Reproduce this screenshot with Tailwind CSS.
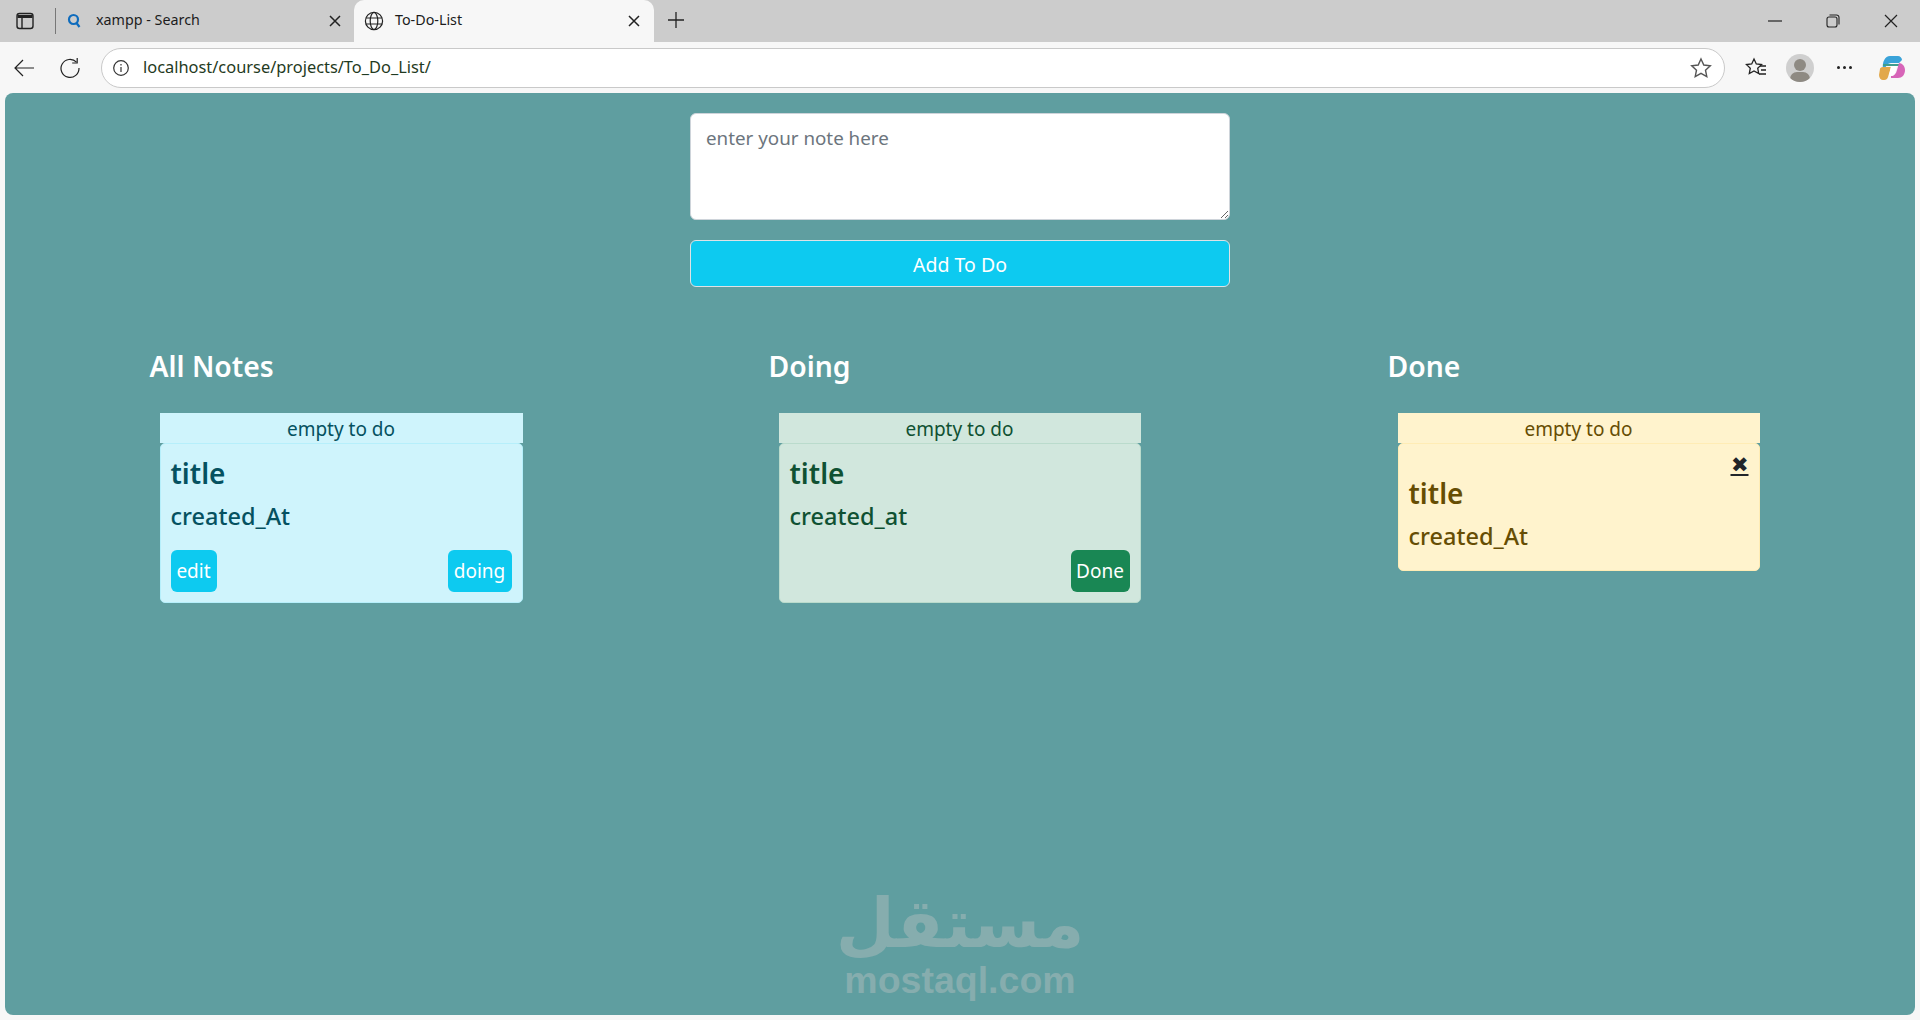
<!DOCTYPE html>
<html lang="en">
<head>
  <meta charset="UTF-8" />
  <title>To-Do-List</title>
  <script src="https://cdn.jsdelivr.net/npm/@tailwindcss/browser@4"></script>
</head>
<body class="h-[1020px] overflow-hidden bg-[#f7f7f7] font-['Noto_Sans',sans-serif]">
  <!-- tabs -->
  <div class="h-[42px] bg-[#cccccc] flex items-center text-[#1c1c1c]">
    <div class="w-[55px] flex justify-center pr-[5px]">
      <svg width="20" height="20" viewBox="0 0 20 20" fill="none" stroke="#222" stroke-width="1.4"><rect x="2" y="2.500" width="16" height="15" rx="2.500"/><path d="M2.500 5.500h15" stroke-width="3"/><path d="M7 7v10"/></svg>
    </div>
    <div class="w-px h-[26px] bg-[#777]"></div>
    <div class="w-[298px] flex items-center pl-[11px] h-full">
      <svg class="w-[14px] h-[16px]" viewBox="0 0 14 16" fill="none" stroke="#0f6cbd" stroke-width="2.2"><circle cx="6.500" cy="6.500" r="4.500"/><path d="M9.500 10l3 4"/></svg>
      <span class="ml-[15px] mb-[2px] text-[14.3px] w-[233px]">xampp - Search</span>
      <svg width="12" height="12" viewBox="0 0 12 12" stroke="#222" stroke-width="1.500"><path d="M1 1l10 10M11 1L1 11"/></svg>
    </div>
    <div class="w-[300px] h-full bg-[#f7f7f7] rounded-t-[10px] flex items-center pl-[10px]">
      <svg width="20" height="20" viewBox="0 0 20 20" fill="none" stroke="#222" stroke-width="1.2"><circle cx="10" cy="10" r="8.600"/><ellipse cx="10" cy="10" rx="3.800" ry="8.600"/><path d="M1.800 7h16.400M1.800 13h16.400"/></svg>
      <span class="ml-[11px] mb-[2px] text-[14.3px] w-[233px]">To-Do-List</span>
      <svg width="12" height="12" viewBox="0 0 12 12" stroke="#222" stroke-width="1.500"><path d="M1 1l10 10M11 1L1 11"/></svg>
    </div>
    <div class="ml-[13px] mb-[2px]">
      <svg width="18" height="18" viewBox="0 0 18 18" stroke="#222" stroke-width="1.3"><path d="M9 1v16M1 9h16"/></svg>
    </div>
    <div class="ml-auto flex items-center pr-[22px] gap-[44px]">
      <svg width="14" height="14" viewBox="0 0 14 14" stroke="#222" stroke-width="1.2"><path d="M0 7h14"/></svg>
      <svg width="14" height="14" viewBox="0 0 14 14" fill="none" stroke="#222" stroke-width="1.1"><rect x="1" y="3" width="10" height="10" rx="2"/><path d="M3.500 1h7a2.500 2.500 0 0 1 2.500 2.500v7"/></svg>
      <svg width="14" height="14" viewBox="0 0 14 14" stroke="#222" stroke-width="1.2"><path d="M1 1l12 12M13 1L1 13"/></svg>
    </div>
  </div>

  <!-- toolbar -->
  <div class="h-[51px] flex items-center">
    <div class="w-[35px] flex justify-end">
      <svg width="22" height="20" viewBox="0 0 22 20" fill="none" stroke="#222" stroke-width="1.2"><path d="M21 10H2M10 2l-8 8 8 8"/></svg>
    </div>
    <div class="w-[46px] flex justify-end">
      <svg width="22" height="22" viewBox="0 0 22 22" fill="none" stroke="#222" stroke-width="1.2"><path d="M17.500 5.200A9 9 0 1 0 20 11"/><path d="M18.200 1v5h-5"/></svg>
    </div>
    <div class="ml-[20px] w-[1624px] h-[40px] bg-white border border-[#c9c9c9] rounded-full flex items-center pl-[10px] pr-[12px]">
      <svg width="18" height="18" viewBox="0 0 18 18" fill="none" stroke="#333" stroke-width="1.2"><circle cx="9" cy="9" r="7.300"/><path d="M9 8v5M9 5v1.400"/></svg>
      <span class="ml-[13px] text-[16.4px] text-[#1f3a22]">localhost/course/projects/To_Do_List/</span>
      <svg class="ml-auto" width="22" height="22" viewBox="0 0 22 22" fill="none" stroke="#555" stroke-width="1.400"><path d="M11 2l2.800 6 6.500.8-4.800 4.400 1.300 6.400L11 16.400l-5.800 3.200 1.300-6.400L1.700 8.800 8.200 8z"/></svg>
    </div>
    <svg class="ml-[20px]" width="22" height="22" viewBox="0 0 22 22" fill="none" stroke="#222" stroke-width="1.300"><path d="M9 2l2.300 5 5.200.6-3.800 3.600 1 5.300L9 13.900l-4.700 2.600 1-5.300L1.500 7.600 6.700 7z"/><path d="M15 9h6M16 13h5M14 17h7"/></svg>
    <div class="ml-[19px] w-[28px] h-[28px] rounded-full bg-[#cfcfcf] relative overflow-hidden">
      <div class="absolute left-[8px] top-[5px] w-[12px] h-[12px] rounded-full bg-[#8e8a83]"></div>
      <div class="absolute left-[4px] top-[18px] w-[20px] h-[14px] rounded-full bg-[#8e8a83]"></div>
    </div>
    <div class="ml-[23px] flex gap-[3px]">
      <div class="w-[3px] h-[3px] rounded-full bg-[#222]"></div>
      <div class="w-[3px] h-[3px] rounded-full bg-[#222]"></div>
      <div class="w-[3px] h-[3px] rounded-full bg-[#222]"></div>
    </div>
    <svg class="ml-[26px]" width="28" height="28" viewBox="0 0 28 28" fill="none">
      <path d="M5 15C4 8 7 2 12 2h8c2 0 4 2 4 4l-3 3h-8c-3 0-5 2-6 6z" fill="#3aa3d9"/>
      <path d="M5 10h17l-1 2H5z" fill="#3f9d8e"/>
      <path d="M2 15c0-1 1-2 3-2h8l-3 10c-1 3-3 3-5 3s-4-2-4-5z" fill="#e2a84a"/>
      <path d="M13 22c3 0 5-2 6-6l2-7c3 0 6 3 6 7 0 5-3 8-7 8h-7z" fill="#d765b8"/>
      <path d="M13 12h6l-2 7c-1 2-2 3-4 3h-2z" fill="#fff"/>
    </svg>
  </div>

  <!-- page -->
  <div class="relative mx-[5px] h-[922px] bg-[#5f9ea0] rounded-[8px] pt-[20px]">
    <form class="w-[540px] mx-auto flex flex-col">
      <textarea placeholder="enter your note here" class="w-full h-[107px] bg-white border border-[#ced4da] rounded-[6px] px-[15px] py-[10px] text-[18.8px] text-[#212529] placeholder:text-[#6c757d] outline-none"></textarea>
      <button type="button" class="mt-[20px] h-[47px] w-full bg-[#0dcaf0] border border-[#dee2e6] rounded-[6px] pt-[2px] text-white text-[19.5px]">Add To Do</button>
    </form>

    <div class="w-[1621px] mx-auto mt-[60px] flex justify-between items-start">
      <div class="w-[383px]">
        <h2 class="h-[38px] text-[28.3px] leading-[38px] font-semibold text-white">All Notes</h2>
        <div class="mt-[28px] mx-[10px]">
          <div class="h-[30px] pt-px bg-[#cff4fc] text-[#055160] text-[19px] leading-[30px] text-center">empty to do</div>
          <div class="h-[160px] bg-[#cff4fc] border border-[#b6effb] rounded-[5px] text-[#055160] px-[10px] pt-[10px] flex flex-col">
            <div class="text-[28px] leading-[38px] font-semibold">title</div>
            <div class="mt-[9px] text-[23.5px] leading-[30px] font-medium">created_At</div>
            <div class="mt-auto mb-[10px] flex justify-between">
              <button type="button" class="h-[42px] w-[46px] bg-[#0dcaf0] rounded-[6px] text-white text-[19px]">edit</button>
              <button type="button" class="h-[42px] w-[64px] bg-[#0dcaf0] rounded-[6px] text-white text-[19px]">doing</button>
            </div>
          </div>
        </div>
      </div>

      <div class="w-[383px]">
        <h2 class="h-[38px] text-[28.3px] leading-[38px] font-semibold text-white">Doing</h2>
        <div class="mt-[28px] ml-[10px] mr-[11px]">
          <div class="h-[30px] pt-px bg-[#d1e7dd] text-[#0f5132] text-[19px] leading-[30px] text-center">empty to do</div>
          <div class="h-[160px] bg-[#d1e7dd] border border-[#badbcc] rounded-[5px] text-[#0f5132] px-[10px] pt-[10px] flex flex-col">
            <div class="text-[28px] leading-[38px] font-semibold">title</div>
            <div class="mt-[9px] text-[23.5px] leading-[30px] font-medium">created_at</div>
            <div class="mt-auto mb-[10px] flex justify-end">
              <button type="button" class="h-[42px] w-[59px] bg-[#198754] rounded-[6px] text-white text-[19px]">Done</button>
            </div>
          </div>
        </div>
      </div>

      <div class="w-[383px]">
        <h2 class="h-[38px] text-[28.3px] leading-[38px] font-semibold text-white">Done</h2>
        <div class="mt-[28px] ml-[10px] mr-[11px]">
          <div class="h-[30px] pt-px bg-[#fff3cd] text-[#664d03] text-[19px] leading-[30px] text-center">empty to do</div>
          <div class="h-[128px] bg-[#fff3cd] border border-[#ffecb5] rounded-[5px] text-[#664d03] px-[10px] pt-[8px] flex flex-col">
            <a href="#" class="self-end h-[22px] text-[#212529] text-[21px] leading-[24px] underline">✖</a>
            <div class="text-[28px] leading-[38px] font-semibold">title</div>
            <div class="mt-[9px] text-[23.5px] leading-[30px] font-medium">created_At</div>
          </div>
        </div>
      </div>
    </div>

    <!-- watermark -->
    <div class="absolute left-[840px] top-[793px] w-[230px] flex flex-col items-center text-[#86adae]">
      <div class="h-[76px] text-[68px] leading-[76px] font-bold font-['DejaVu_Sans',sans-serif]" dir="rtl">مستقل</div>
      <div class="-mt-[2px] text-[37.500px] leading-[40px] font-bold font-['Liberation_Sans',sans-serif]">mostaql.com</div>
    </div>
  </div>
</body>
</html>
